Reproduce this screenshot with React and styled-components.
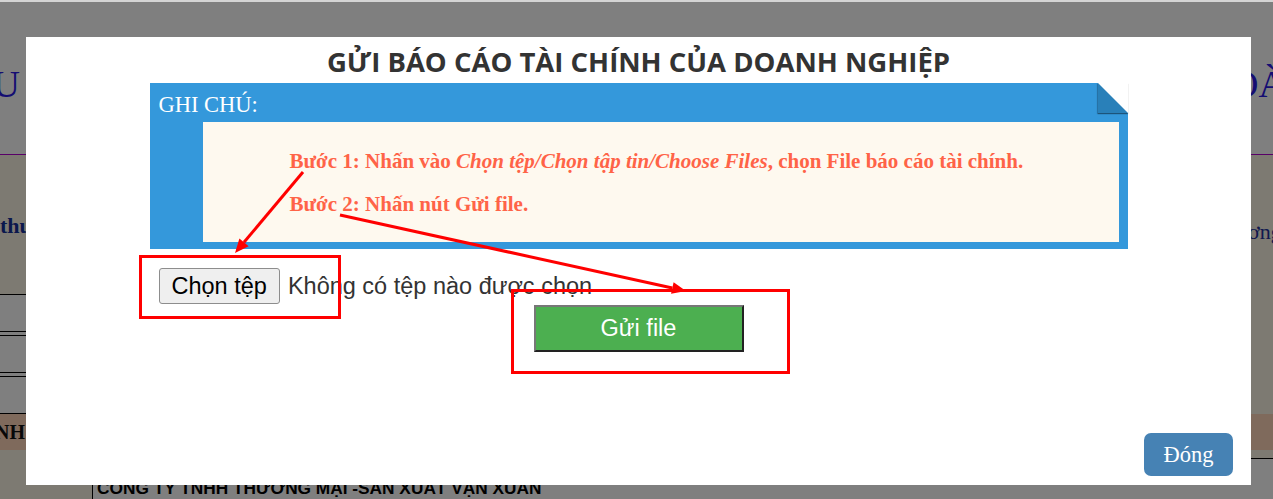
import React from "react";
import styled, { createGlobalStyle } from "styled-components";

const GlobalStyle = createGlobalStyle`
  html, body {
    margin: 0;
    padding: 0;
  }
  body {
    background: #fff;
    font-family: "Liberation Serif", "Times New Roman", serif;
    overflow: hidden;
  }
`;

/* ---------- page behind the modal ---------- */

const Page = styled.div`
  height: 100vh;
  overflow: hidden;
  background: #faf4e4;
`;

const Header = styled.header`
  height: 140px;
  padding-top: 14px;
  display: flex;
  justify-content: space-between;
  align-items: center;
  background: #fff;
  border-bottom: 1px solid #b000d0;
  color: #2a1ae6;
  font-size: 38px;
  white-space: nowrap;
  overflow: hidden;
`;

const Edge = styled.div`
  flex: 0 0 ${({ $width }) => $width}px;
  width: ${({ $width }) => $width}px;
  min-width: 0;
  display: flex;
  justify-content: ${({ $side }) => ($side === "left" ? "flex-end" : "flex-start")};
  white-space: nowrap;
`;

const IntroRow = styled.div`
  height: 26px;
  margin-top: 58px;
  display: flex;
  justify-content: space-between;
  align-items: flex-start;
  line-height: 26px;
  font-size: 22px;
`;

const IntroLead = styled.span`
  font-weight: bold;
  color: #14309a;
  white-space: nowrap;
`;

const IntroTail = styled(Edge)`
  padding-top: 8px;
  line-height: 22px;
  color: #23339c;
`;

const Grid = styled.div`
  margin-top: 55px;
  width: 620px;
  background: #fff;
`;

const GridRow = styled.div`
  height: 36px;
  border-top: 1px solid #000;
  border-bottom: 1px solid #000;
  & + & {
    margin-top: 3px;
  }
`;

const GroupBar = styled.div`
  height: 36px;
  display: flex;
  align-items: center;
  background: #fed5b8;
  color: #111;
  font-weight: bold;
  font-size: 20px;
  overflow: hidden;
`;

const Company = styled.div`
  margin: 8px 0 0 92px;
  height: 80px;
  box-sizing: border-box;
  padding: 18px 0 0 4px;
  background: #fff;
  border-top: 1px solid #000;
  border-left: 1px solid #000;
  font: bold 17.3px/22px "Liberation Sans", Arial, sans-serif;
  color: #000;
  white-space: nowrap;
`;

/* ---------- modal ---------- */

const Overlay = styled.div`
  position: fixed;
  inset: 0;
  z-index: 2;
  display: flex;
  box-sizing: border-box;
  padding: 35px 22px 14px 26px;
  border-top: 2px solid #d4d4d4;
  background: rgba(0, 0, 0, 0.5);
`;

const Modal = styled.div`
  flex: 1;
  display: flex;
  flex-direction: column;
  align-items: center;
  box-sizing: border-box;
  padding: 0 18px 9px;
  background: #fff;
`;

const Title = styled.h2`
  margin: 8px 0 5px;
  font: 700 27.5px/33px "Open Sans", "Liberation Sans", sans-serif;
  color: #333;
  white-space: nowrap;
`;

const NoteBox = styled.div`
  position: relative;
  width: 978px;
  box-sizing: border-box;
  padding: 0 9px 7px;
  background: #3498db;

  &::before {
    content: "";
    position: absolute;
    top: 0;
    right: 0;
    border-style: solid;
    border-width: 0 30px 30px 0;
    border-color: #fff #fff #2980b9 #2980b9;
    box-shadow: 0 1px 1px rgba(0, 0, 0, 0.3), -1px 1px 1px rgba(0, 0, 0, 0.2);
  }
`;

const NoteLabel = styled.div`
  padding-top: 5px;
  line-height: 34px;
  font-size: 22.5px;
  color: #fff;
`;

const NoteBody = styled.div`
  margin-left: 44px;
  height: 120px;
  box-sizing: border-box;
  padding: 18px 0 0 87px;
  background: #fef9ef;
`;

const Step = styled.p`
  margin: 0;
  font-size: 21px;
  font-weight: bold;
  line-height: 43px;
  color: #ff6347;
  white-space: nowrap;
`;

const FileRow = styled.div`
  width: 978px;
  box-sizing: border-box;
  margin-top: 19px;
  padding-left: 9px;
  display: flex;
  align-items: center;
  font: 23.5px "Liberation Sans", Arial, sans-serif;
`;

const PickButton = styled.button`
  height: 36px;
  padding: 0 12px;
  border: 1px solid #8d8d8d;
  border-radius: 3px;
  background: #efefef;
  color: #000;
  font: inherit;
`;

const FileName = styled.span`
  margin-left: 8px;
  color: #333;
`;

const SendButton = styled.button`
  margin-top: 1px;
  width: 210px;
  height: 47px;
  box-sizing: border-box;
  border: 2px solid;
  border-color: #777 #222 #222 #777;
  background: #4caf50;
  color: #fff;
  font: 23.5px "Liberation Sans", Arial, sans-serif;
`;

const Footer = styled.div`
  margin-top: auto;
  align-self: flex-end;
`;

const CloseButton = styled.button`
  width: 89px;
  height: 43px;
  border: none;
  border-radius: 7px;
  background: #4682b4;
  color: #fff;
  font: 22.5px "Liberation Serif", "Times New Roman", serif;
`;

/* ---------- red annotations drawn on top ---------- */

const Marks = styled.svg`
  position: fixed;
  inset: 0;
  z-index: 3;
  width: 100%;
  height: 100%;
  pointer-events: none;
`;

const Arrow = ({ x1, y1, x2, y2 }) => {
  const len = Math.hypot(x2 - x1, y2 - y1);
  const ux = (x2 - x1) / len;
  const uy = (y2 - y1) / len;
  const bx = x2 - ux * 14;
  const by = y2 - uy * 14;
  const nx = -uy * 6;
  const ny = ux * 6;
  const head = `${x2},${y2} ${bx + nx},${by + ny} ${bx - nx},${by - ny}`;
  return (
    <g>
      <line x1={x1} y1={y1} x2={bx} y2={by} stroke="#f00" strokeWidth="3" />
      <polygon points={head} fill="#f00" />
    </g>
  );
};

export default function App() {
  return (
    <>
      <GlobalStyle />
      <Page>
        <Header>
          <Edge $side="left" $width={20}>
            <span>HỆ THỐNG TIẾP NHẬN CÁC CHỈ TIÊU</span>
          </Edge>
          <Edge $side="right" $width={42}>
            <span>OÀN TỈNH</span>
          </Edge>
        </Header>
        <IntroRow>
          <IntroLead>thuế, quý doanh nghiệp vui lòng gửi báo cáo đúng hạn</IntroLead>
          <IntroTail $side="right" $width={25}>
            <span>ơng tin</span>
          </IntroTail>
        </IntroRow>
        <Grid>
          <GridRow />
          <GridRow />
          <GridRow />
        </Grid>
        <GroupBar>
          <Edge $side="left" $width={25}>
            <span>DANH</span>
          </Edge>
        </GroupBar>
        <Company>CÔNG TY TNHH THƯƠNG MẠI -SẢN XUẤT VẠN XUÂN</Company>
      </Page>

      <Overlay>
        <Modal>
          <Title>GỬI BÁO CÁO TÀI CHÍNH CỦA DOANH NGHIỆP</Title>
          <NoteBox>
            <NoteLabel>GHI CHÚ:</NoteLabel>
            <NoteBody>
              <Step>
                Bước 1: Nhấn vào <i>Chọn tệp/Chọn tập tin/Choose Files</i>, chọn File báo cáo tài chính.
              </Step>
              <Step>Bước 2: Nhấn nút Gửi file.</Step>
            </NoteBody>
          </NoteBox>
          <FileRow>
            <PickButton>Chọn tệp</PickButton>
            <FileName>Không có tệp nào được chọn</FileName>
          </FileRow>
          <SendButton>Gửi file</SendButton>
          <Footer>
            <CloseButton>Đóng</CloseButton>
          </Footer>
        </Modal>
      </Overlay>

      <Marks>
        <rect x="140.5" y="256.5" width="199" height="61" fill="none" stroke="#f00" strokeWidth="3" />
        <rect x="512.5" y="290.5" width="276" height="82" fill="none" stroke="#f00" strokeWidth="3" />
        <Arrow x1={303} y1={172} x2={235} y2={253} />
        <Arrow x1={340} y1={215} x2={686} y2={291} />
      </Marks>
    </>
  );
}
